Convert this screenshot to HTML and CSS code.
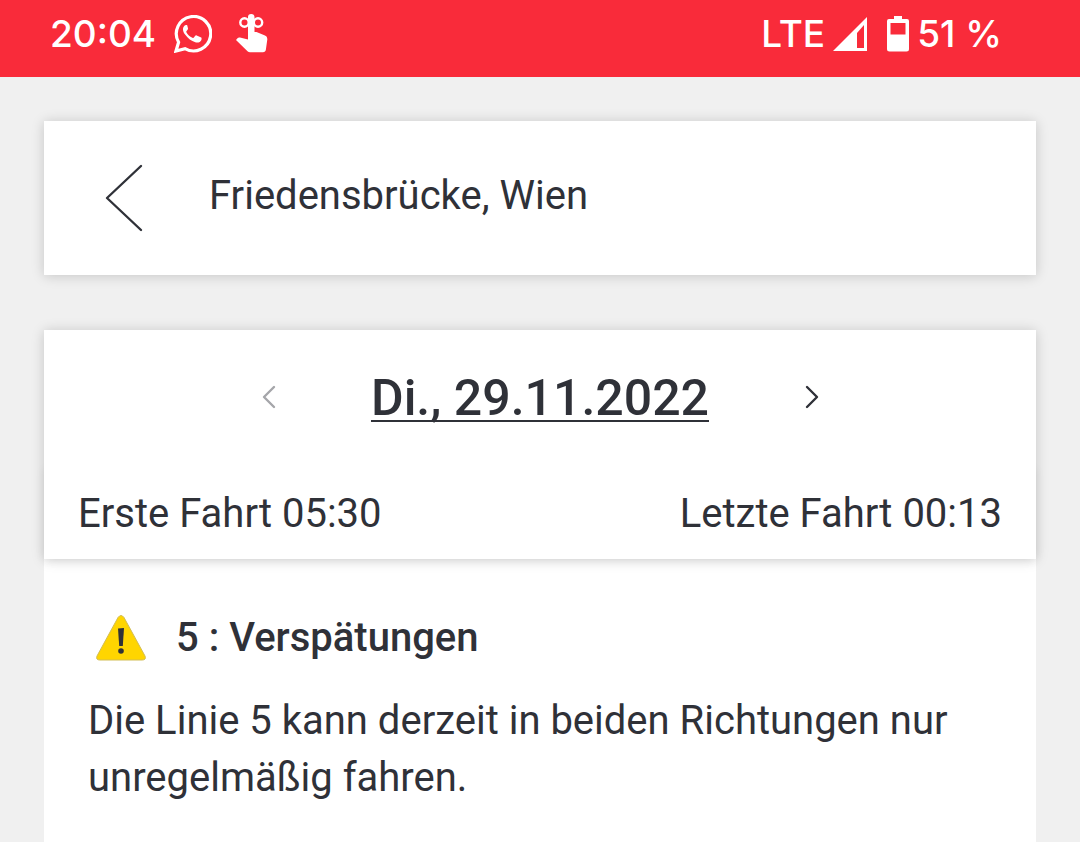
FILE: index.html
```
<!DOCTYPE html>
<html lang="de">
<head>
  <meta charset="UTF-8">
  <meta name="viewport" content="width=device-width, initial-scale=1.0">
  <title>Friedensbrücke, Wien</title>
  <link rel="stylesheet" href="styles.css">
</head>
<body>
  <div class="status-bar">
    <div class="status-group status-left">
      <span>20:04</span>
      <svg class="icon-whatsapp" width="38" height="38" viewBox="0 0 38 38" fill="none">
        <path d="M2 36 4.600 27.200A17.200 17.200 0 1 1 11 33.600Z" stroke="#fff" stroke-width="3.200" stroke-linejoin="miter"/>
        <path d="M13.200 10.300c-.8-.5-2.300-.3-3 .6-2.200 2.700-1.100 6 1.100 8.900 2.700 3.600 6 6.400 10 7.500 2.600.7 5.500-.4 6.100-2.400.3-.9.300-2-.2-2.300l-4.600-2.200c-.6-.3-1-.1-1.400.4l-1.300 1.700c-.4.500-.8.500-1.500.2-2.700-1.200-4.800-3.200-6-5.500-.3-.6 0-1 .4-1.400l1.100-1.500c.3-.5.2-.8 0-1.300Z" fill="#fff"/>
      </svg>
      <svg class="icon-touch" width="32" height="40" viewBox="0 0 32 40" fill="none">
        <path d="M12 3q0-3 3.200-3T18.500 3v15h2l8.500 3.500q2.600 1 2.300 4l-1.400 10q-.4 2.800-3 2.800H14q-1.400 0-2.500-1L0 26l1.500-1.800q1-1 2.500-.6L12 25.500Z" fill="#fff"/>
        <circle cx="8.500" cy="8.500" r="4.200" stroke="#fff" stroke-width="2.400"/>
        <circle cx="22" cy="8.500" r="4.200" stroke="#fff" stroke-width="2.400"/>
      </svg>
    </div>
    <div class="status-group status-right">
      <span>LTE</span>
      <svg class="icon-signal" width="34" height="34" viewBox="0 0 34 34">
        <path fill="#fff" fill-rule="evenodd" d="M34 0v34H0ZM31 8v23h-7V16Z"/>
      </svg>
      <svg class="icon-battery" width="22" height="36" viewBox="0 0 22 36">
        <path fill="#fff" fill-rule="evenodd" d="M7 0h8v3h5q2 0 2 2v28q0 2.500-2.500 2.500h-17Q0 35.500 0 33V5q0-2 2-2h5ZM3.500 7v11.500h15V7Z"/>
      </svg>
      <span>51 %</span>
    </div>
  </div>

  <main>
    <header class="card station">
      <button type="button" class="icon-btn" aria-label="Zurück">
        <svg width="38" height="68" viewBox="0 0 38 68" fill="none" stroke="#2f3138" stroke-width="2.400" stroke-linecap="round" stroke-linejoin="round">
          <path d="M36 2 2 34 36 66"/>
        </svg>
      </button>
      <h1>Friedensbrücke, Wien</h1>
    </header>

    <section class="card departures">
      <div class="date-nav">
        <button type="button" class="icon-btn" aria-label="Vorheriger Tag" disabled>
          <svg width="16" height="24" viewBox="0 0 16 24" fill="none" stroke="currentColor" stroke-width="2.400" stroke-linecap="round" stroke-linejoin="round">
            <path d="M14 2 4 12 14 22"/>
          </svg>
        </button>
        <a href="#" class="date">Di., 29.11.2022</a>
        <button type="button" class="icon-btn" aria-label="Nächster Tag">
          <svg width="16" height="24" viewBox="0 0 16 24" fill="none" stroke="currentColor" stroke-width="2.400" stroke-linecap="round" stroke-linejoin="round">
            <path d="M3 2 13 12 3 22"/>
          </svg>
        </button>
      </div>
      <div class="trips">
        <span>Erste Fahrt 05:30</span>
        <span>Letzte Fahrt 00:13</span>
      </div>
    </section>

    <article class="notice">
      <h2>
        <svg width="50" height="46" viewBox="0 0 50 46">
          <path d="M22 2.500Q25-1.500 28 2.500L49 41q1.500 4-3 4H4q-4.500 0-3-4Z" fill="#ffd500" stroke="#d2bd55" stroke-width="1"/>
          <path d="M22 13.500 28 13 26.800 31h-3.600Z" fill="#2f3138"/>
          <circle cx="25" cy="36" r="2.800" fill="#2f3138"/>
        </svg>
        <span>5 : Verspätungen</span>
      </h2>
      <p>Die Linie 5 kann derzeit in beiden Richtungen nur unregelmäßig fahren.</p>
    </article>
  </main>
</body>
</html>
```
FILE: styles.css
```
* {
  box-sizing: border-box;
  margin: 0;
  padding: 0;
}

body {
  min-height: 100vh;
  display: flex;
  flex-direction: column;
  font-family: Roboto, sans-serif;
  font-size: 40px;
  line-height: 57px;
  color: #2f3138;
  background-color: #f0f0f0;
}

svg {
  display: block;
  flex-shrink: 0;
}

.status-bar {
  display: flex;
  justify-content: space-between;
  height: 77px;
  padding: 0 78px 10px 50px;
  background-color: #f92b3a;
  color: #fff;
  font-family: Inter, sans-serif;
  font-size: 37px;
  font-weight: 500;
}

.status-group {
  display: flex;
  align-items: center;
}

.status-left {
  gap: 18px;
}

.icon-touch {
  margin-left: 6px;
}

.status-right {
  gap: 8px;
}

.icon-signal {
  margin-right: 12px;
}

main {
  flex: 1;
  display: flex;
  flex-direction: column;
  padding: 44px 44px 0;
}

.card {
  position: relative;
  background-color: #fff;
  box-shadow: 0 1px 12px rgba(0, 0, 0, 0.18);
}

.station {
  display: flex;
  align-items: center;
  gap: 66px;
  height: 154px;
  padding: 0 61px;
  margin-bottom: 55px;
}

h1 {
  font-size: 40px;
  font-weight: 400;
  padding-bottom: 5px;
}

.icon-btn {
  border: none;
  background: none;
  color: inherit;
  cursor: pointer;
}

.icon-btn:disabled {
  color: #a5a6aa;
  cursor: default;
}

.date-nav {
  position: relative;
  z-index: 1;
  display: flex;
  align-items: center;
  justify-content: space-between;
  height: 138px;
  padding: 34px 216px 38px;
  background-color: #fff;
}

.date {
  padding-top: 2px;
  color: inherit;
  font-size: 50px;
  font-weight: 500;
  line-height: 66px;
  text-decoration-thickness: 2px;
  text-underline-offset: 5px;
  text-decoration-skip-ink: none;
}

.trips {
  display: flex;
  justify-content: space-between;
  padding: 17px 34px;
  box-shadow: 0 1px 10px rgba(0, 0, 0, 0.06);
}

.notice {
  flex: 1;
  padding: 50px 44px;
  background-color: #fff;
}

h2 {
  display: flex;
  align-items: center;
  gap: 30px;
  padding-left: 8px;
  margin-bottom: 26px;
  font-size: 40px;
  font-weight: 500;
}
```
